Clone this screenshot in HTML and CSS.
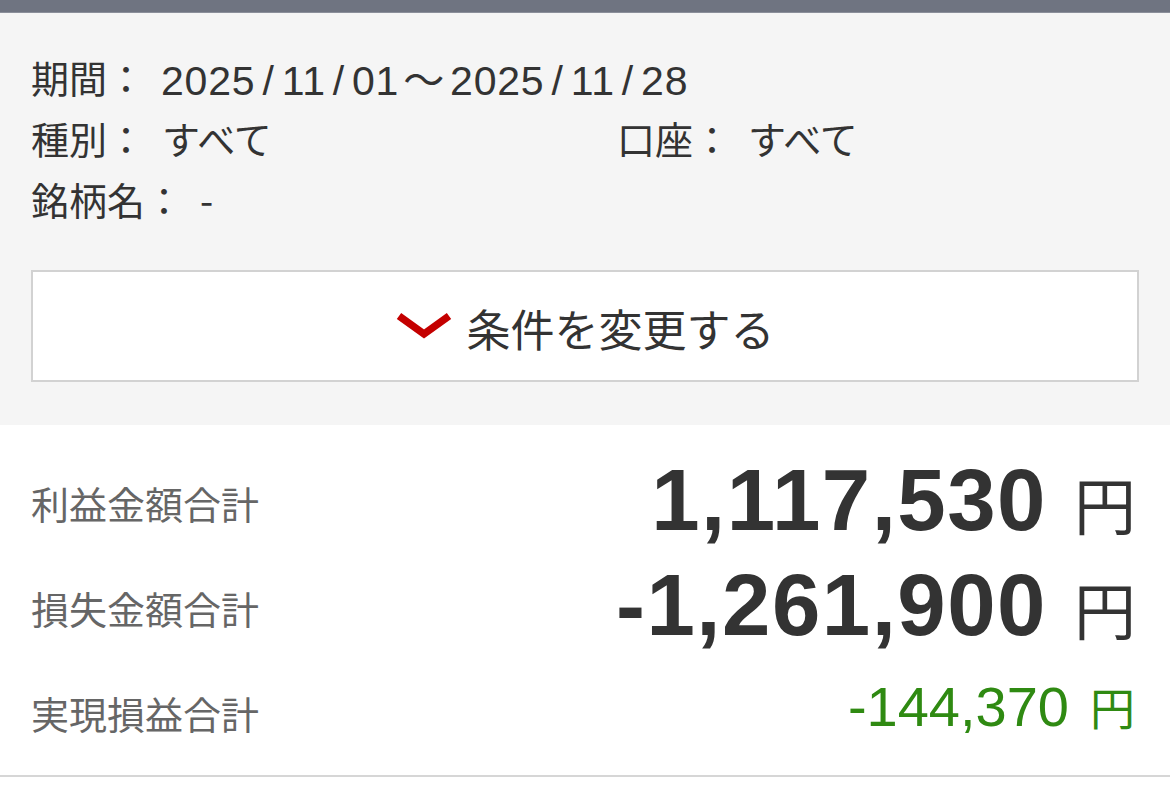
FILE: index.html
```html
<!DOCTYPE html>
<html lang="ja">
<head>
<meta charset="utf-8">
<link rel="stylesheet" href="styles.css">
</head>
<body>
<div class="topbar"></div>
<section class="conditions">
  <div class="info">
    <div class="row"><span class="lbl">期間：</span><span class="v date">2025<span class="sl">/</span>11<span class="sl">/</span>01<span class="tl">～</span>2025<span class="sl">/</span>11<span class="sl">/</span>28</span></div>
    <div class="row two">
      <div><span class="lbl">種別：</span><span class="v">すべて</span></div>
      <div><span class="lbl">口座：</span><span class="v">すべて</span></div>
    </div>
    <div class="row"><span class="lbl">銘柄名：</span><span class="v">-</span></div>
  </div>
  <button class="change">
    <svg class="chev" width="56" height="28" viewBox="0 0 56 28"><polyline points="3,4 28,22 53,4" fill="none" stroke="#c40000" stroke-width="7.5" stroke-linejoin="miter"/></svg>
    <span>条件を変更する</span>
  </button>
</section>
<section class="summary">
  <div class="srow">
    <span class="slbl">利益金額合計</span>
    <span class="sval big"><span class="num">1,117,530</span><span class="yen">円</span></span>
  </div>
  <div class="srow">
    <span class="slbl">損失金額合計</span>
    <span class="sval big"><span class="num">-1,261,900</span><span class="yen">円</span></span>
  </div>
  <div class="srow">
    <span class="slbl">実現損益合計</span>
    <span class="sval net"><span class="num">-144,370</span><span class="yen">円</span></span>
  </div>
</section>
</body>
</html>
```
FILE: styles.css
```css
html, body {
  margin: 0;
  padding: 0;
  background: #ffffff;
}
body {
  font-family: "Noto Sans CJK JP", sans-serif;
  color: #333333;
}
.topbar {
  height: 12px;
  background: #6f7481;
  border-bottom: 1px solid #8b8f9a;
}
.conditions {
  background: #f5f5f5;
  padding: 33px 31px 43px 31px;
}
.info {
  font-size: 38px;
  color: #333333;
}
.row {
  height: 61px;
  display: flex;
  align-items: center;
  white-space: nowrap;
}
.row.two {
  display: grid;
  grid-template-columns: 586px 1fr;
  align-items: center;
}
.lbl {
  font-family: "Noto Sans CJK JP", sans-serif;
}
.v {
  margin-left: 17px;
}
.date {
  font-family: "Liberation Sans", "Noto Sans CJK JP", sans-serif;
  font-size: 41px;
  letter-spacing: 0.8px;
  margin-left: 16px;
}
.sl {
  margin: 0 7px;
}
.tl {
  font-family: "Noto Sans CJK JP", sans-serif;
  margin: 0 5px 0 4px;
}
.change {
  margin-top: 41px;
  width: 100%;
  height: 112px;
  box-sizing: border-box;
  background: #ffffff;
  border: 2px solid #d2d2d2;
  display: flex;
  align-items: center;
  justify-content: center;
  gap: 15px;
  font-family: "Noto Sans CJK JP", sans-serif;
  font-size: 44px;
  color: #333333;
  padding: 0;
  cursor: pointer;
}
.change span {
  line-height: 1;
  margin-top: 4px;
}
.chev {
  display: block;
}
.summary {
  padding: 25px 31px 10px 31px;
  border-bottom: 2px solid #d6d6d6;
}
.srow {
  height: 105px;
  display: flex;
  align-items: center;
  justify-content: space-between;
}
.slbl {
  font-size: 38px;
  color: #666666;
}
.sval {
  display: flex;
  align-items: baseline;
  white-space: nowrap;
}
.sval .num {
  font-family: "Liberation Sans", Arial, sans-serif;
}
.big {
  color: #333333;
  margin-top: -6px;
}
.big .num {
  font-size: 87px;
  font-weight: bold;
  letter-spacing: 1.5px;
}
.big .yen {
  font-size: 62px;
  margin-left: 27px;
  margin-right: 3px;
}
.net {
  color: #2f8a12;
  margin-top: -12px;
}
.net .num {
  font-size: 56px;
}
.net .yen {
  font-size: 45px;
  margin-left: 21px;
  margin-right: 4px;
}
```
